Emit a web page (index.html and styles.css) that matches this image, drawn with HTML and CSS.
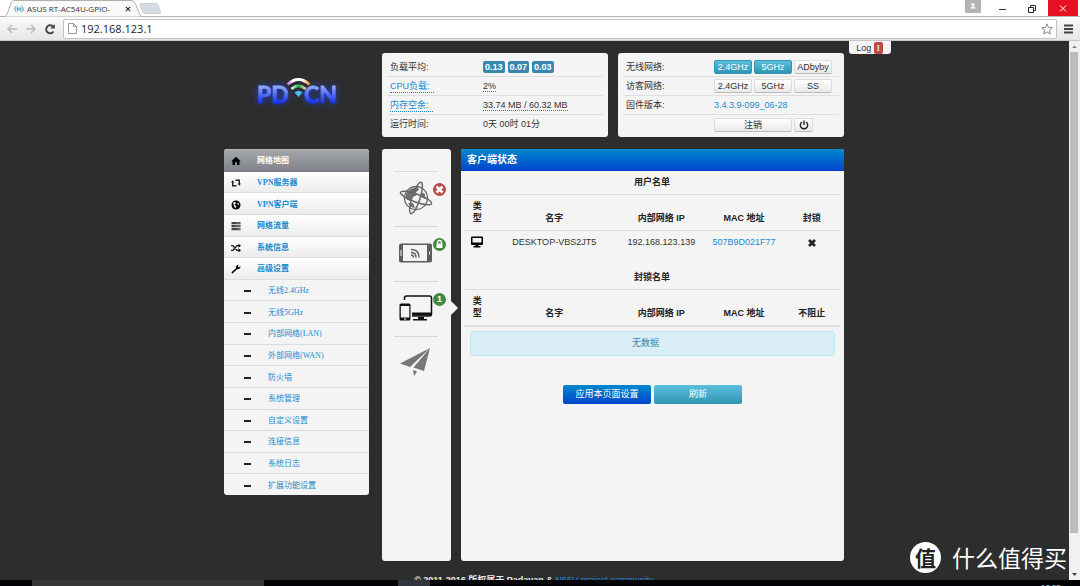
FILE: index.html
```
<!DOCTYPE html>
<html lang="zh-CN">
<head>
<meta charset="utf-8">
<title>ASUS RT-AC54U-GPIO</title>
<link rel="stylesheet" href="styles.css">
</head>
<body>
<header class="tabstrip">
  <div class="tab">
    <svg class="tab-shape" viewBox="0 0 138 17" preserveAspectRatio="none"><path d="M0 17C5 16 5 1 10 .5H128C133 1 134 16 138 17Z" fill="#fafafa" stroke="#b0b0b0"/></svg>
    <svg class="favicon" viewBox="0 0 10 8" fill="none" stroke="#2a9bd0"><path d="M2.500 .8Q-.8 4 2.500 7.200M4 2Q2 4 4 6M7.500 .8Q10.800 4 7.500 7.200M6 2Q8 4 6 6"/><circle cx="5" cy="4" r=".5"/></svg>
    <span class="tab-title">ASUS RT-AC54U-GPIO-</span>
    <button class="tab-close" aria-label="关闭标签页"><svg viewBox="0 0 6 6" stroke="#333" stroke-width="1.200"><path d="M.8 .8 5.200 5.200M5.200 .8 .8 5.200"/></svg></button>
  </div>
  <svg class="newtab" viewBox="0 0 22 11"><path d="M2 .5H17Q19 .5 19.500 3L21.500 9Q21.500 10.500 20 10.500H6Q4 10.500 3.500 8.500L1 2Q.8 .5 2 .5Z" fill="#d5dce4" stroke="#c9cfd6"/></svg>
  <div class="window-controls">
    <button class="user" aria-label="用户"><svg viewBox="0 0 16 13" fill="#fff"><circle cx="8" cy="4.500" r="1.600"/><path d="M5.500 8.500Q5.500 6 8 6.500 10.500 6 10.500 8.500Z"/></svg></button>
    <button class="wc" aria-label="最小化"><svg viewBox="0 0 30 17" stroke="#333" fill="none"><path d="M11 9.500H18"/></svg></button>
    <button class="wc" aria-label="还原"><svg viewBox="0 0 30 17" stroke="#222" fill="none"><path d="M10.500 7.500H15.500V12.500H10.500ZM12.500 7.500V5.500H17.500V10.500H15.500"/></svg></button>
    <button class="wc close" aria-label="关闭"><svg viewBox="0 0 30 17" stroke="#fff" fill="none"><path d="M12 5.500 18 11.500M18 5.500 12 11.500"/></svg></button>
  </div>
</header>
<div class="toolbar">
  <button class="tool" aria-label="后退"><svg viewBox="0 0 12 12" fill="none" stroke="#bbb" stroke-width="1.500"><path d="M11 6H2M6 2 2 6 6 10"/></svg></button>
  <button class="tool" aria-label="前进"><svg viewBox="0 0 12 12" fill="none" stroke="#bbb" stroke-width="1.500"><path d="M1 6H10M6 2 10 6 6 10"/></svg></button>
  <button class="tool" aria-label="刷新页面"><svg viewBox="0 0 12 12"><path d="M9.500 8.500A4 4 0 1 1 8.800 3.300" fill="none" stroke="#444" stroke-width="1.900"/><path d="M10.800 1V5.600H6.200Z" fill="#444"/></svg></button>
  <div class="address">
    <svg class="page" viewBox="0 0 9 11" fill="#fff" stroke="#999"><path d="M.5 .5H5.500L8.500 3.500V10.500H.5ZM5.500 .5V3.500H8.500"/></svg>
    <input type="text" aria-label="地址" value="192.168.123.1">
    <svg class="star" viewBox="0 0 12 12" fill="#fff" stroke="#888"><path d="M6 .8 7.500 4.500 11.400 4.700 8.300 7.200 9.400 11 6 8.900 2.600 11 3.700 7.200 .6 4.700 4.500 4.500Z"/></svg>
  </div>
  <button class="menu" aria-label="菜单"><svg viewBox="0 0 10 10" stroke="#444" stroke-width="2"><path d="M0 1.500H9M0 5H9M0 8.500H9"/></svg></button>
</div>

<div class="viewport">
  <main class="content">
    <button class="log">Log <b>!</b></button>
    <div class="page-grid">
      <div class="top">
        <div class="logo">
          <svg viewBox="0 0 100 44">
            <defs>
              <linearGradient id="word" x1="0" y1="0" x2="0" y2="1"><stop offset=".2" stop-color="#93aef5"/><stop offset=".8" stop-color="#1735f2"/></linearGradient>
              <linearGradient id="arc"><stop offset="0" stop-color="#b06fd0"/><stop offset=".25" stop-color="#fff"/><stop offset=".7" stop-color="#fff"/><stop offset="1" stop-color="#f28a2c"/></linearGradient>
              <linearGradient id="arc2"><stop offset="0" stop-color="#eee"/><stop offset=".5" stop-color="#25b34b"/><stop offset="1" stop-color="#f5c7a0"/></linearGradient>
            </defs>
            <g class="word" fill="url(#word)" stroke="url(#word)" stroke-width=".8"><text x="8" y="31">PD</text><text x="55" y="31">CN</text></g>
            <path d="M39 13Q49.500 3 60 13L57 17 49.500 24 42 17Z" fill="#2b2b33"/>
            <path d="M38.500 12.500Q49.500 2.500 60.500 12.500" fill="none" stroke="url(#arc)" stroke-width="3"/>
            <path d="M42.500 17Q49.500 10.500 56.500 17" fill="none" stroke="url(#arc2)" stroke-width="3"/>
            <path d="M45.500 20.500Q49.500 17 53.500 20.500L49.500 25Z" fill="#4db8f0"/>
          </svg>
        </div>
        <section class="card status">
          <div class="row"><span>负载平均:</span><span class="loads"><b>0.13</b><b>0.07</b><b>0.03</b></span></div>
          <div class="row"><a class="dotted" href="#">CPU负载:&ensp;</a><span><span class="dotted">2%</span></span></div>
          <div class="row"><a class="dotted" href="#">内存空余:&ensp;</a><span><span class="dotted">33.74 MB / 60.32 MB</span></span></div>
          <div class="row"><span>运行时间:</span><span>0天 00时 01分</span></div>
        </section>
        <section class="card wifi">
          <div class="row"><span>无线网络:</span><span class="btns"><button class="btn info">2.4GHz</button><button class="btn info">5GHz</button><button class="btn">ADbyby</button></span></div>
          <div class="row"><span>访客网络:</span><span class="btns"><button class="btn">2.4GHz</button><button class="btn">5GHz</button><button class="btn">SS</button></span></div>
          <div class="row"><span>固件版本:</span><a href="#">3.4.3.9-099_06-28</a></div>
          <div class="row"><span></span><span class="btns"><button class="btn wide">注销</button><button class="btn power" aria-label="电源"><svg viewBox="0 0 10 10" fill="none" stroke="#222" stroke-width="1.400"><path d="M3 2A3.700 3.700 0 1 0 7 2M5 .5V5"/></svg></button></span></div>
        </section>
      </div>

      <div class="lower">
        <nav class="side">
          <a class="item active" href="#"><svg viewBox="0 0 10 10"><path d="M5 .8 9.800 5.200H8.500V9H6V6.300H4V9H1.500V5.200H.2Z"/></svg>网络地图</a>
          <a class="item" href="#"><svg viewBox="0 0 10 10" fill="none" stroke="#222" stroke-width="1.400"><path d="M1.700 4V7.800H5.500M8.300 6V2.200H4.500"/><path d="M0 4.500 1.700 2.300 3.400 4.500ZM6.600 5.500 8.300 7.700 10 5.500Z" fill="#222" stroke="none"/></svg>VPN服务器</a>
          <a class="item" href="#"><svg viewBox="0 0 10 10"><circle cx="5" cy="5" r="4.500"/><path d="M2 2.500 4.500 2 5 3.500 3.500 4.500 5.500 6.500 4.500 8.500 3 6ZM6.500 2.500 8 3.500 7.500 5.500 6.300 4Z" fill="#eee"/></svg>VPN客户端</a>
          <a class="item" href="#"><svg viewBox="0 0 10 10" fill="#444"><path d="M.5 1H9.500V3.200H.5ZM.5 4H9.500V6.200H.5ZM.5 7H9.500V9.200H.5Z"/><path d="M5 2H9M4 5H9M6 8H9" stroke="#aaa" stroke-width=".6"/></svg>网络流量</a>
          <a class="item" href="#"><svg viewBox="0 0 10 10"><path d="M0 2.700H2L6 7.300H8M0 7.300H2L6 2.700H8" fill="none" stroke="#222" stroke-width="1.300"/><path d="M7.500 .8 10 2.700 7.500 4.600ZM7.500 5.400 10 7.300 7.500 9.200Z"/></svg>系统信息</a>
          <a class="item" href="#"><svg viewBox="0 0 10 10"><path d="M.8 9.200Q.2 8.300 1 7.700L5 4.200Q4.500 1.800 6.300 .9L8 .8 6.800 2.200 7.200 3.200 8.200 3.300 9.400 2Q9.700 5.500 6 5.300L2.200 9.100Q1.500 9.900 .8 9.200Z"/></svg>高级设置</a>
          <a class="sub" href="#">无线2.4GHz</a>
          <a class="sub" href="#">无线5GHz</a>
          <a class="sub" href="#">内部网络(LAN)</a>
          <a class="sub" href="#">外部网络(WAN)</a>
          <a class="sub" href="#">防火墙</a>
          <a class="sub" href="#">系统管理</a>
          <a class="sub" href="#">自定义设置</a>
          <a class="sub" href="#">连接信息</a>
          <a class="sub" href="#">系统日志</a>
          <a class="sub" href="#">扩展功能设置</a>
        </nav>

        <nav class="strip">
          <a href="#" aria-label="互联网">
            <svg viewBox="0 0 34 34" fill="none" stroke="#686868"><circle cx="17" cy="17" r="11.500" stroke-width="1.300"/><path d="M7 13Q10 6 19 6.500L20 9 17 11 18 14 14 16 11 20 7 18ZM9 22 14 22 16 27 12 26ZM22 11 26 13 26 18 22 16Z" fill="#707070" stroke="none"/><ellipse cx="17" cy="17" rx="16.500" ry="4" transform="rotate(20 17 17)" stroke-width="1.500"/><ellipse cx="17" cy="17" rx="16.500" ry="4" transform="rotate(-72 17 17)" stroke-width="1.500"/></svg>
            <i class="badge red"><svg viewBox="0 0 13 13" stroke="#fff" stroke-width="2.600"><path d="M3.500 3.500 9.500 9.500M9.500 3.500 3.500 9.500"/></svg></i>
          </a>
          <a href="#" aria-label="无线">
            <svg viewBox="0 0 34 34"><rect x="0" y="7.500" width="33" height="19" rx="2" fill="#5e5e5e"/><path d="M4 9H28V25H4Z" fill="#f4f4f4"/><path d="M2 14V20M30.500 15.500V18.500" stroke="#eee"/><g fill="none" stroke="#606060" stroke-width="1.400"><path d="M12 13.500Q20 13.500 20 21.500M12 16.500Q17 16.500 17 21.500M12 19Q14.500 19 14.500 21.500"/></g></svg>
            <i class="badge green"><svg viewBox="0 0 13 13"><path d="M3.500 5.500H9.500V10H3.500Z" fill="#fff"/><path d="M4.500 6V4.500Q4.500 2.500 6.500 2.500T8.500 4.500V6" fill="none" stroke="#fff" stroke-width="1.300"/></svg></i>
          </a>
          <a class="current" href="#" aria-label="客户端">
            <svg viewBox="0 0 34 34"><path d="M5.500 9V7Q5.500 5 7.500 5H30.500Q32.500 5 32.500 7V23Q32.500 25 30.500 25H13" fill="none" stroke="#111" stroke-width="1.500"/><path d="M13 21.500H32.500V24.500H13ZM19 26H25V28H28V29.500H14V28H19Z" fill="#111"/><path d="M2 12.500H10Q11.500 12.500 11.500 14V28Q11.500 29.500 10 29.500H2Q.5 29.500 .5 28V14Q.5 12.500 2 12.500Z" fill="#111"/><path d="M1.800 15H10.300V26.500H1.800Z" fill="#f4f4f4"/><path d="M5 28H7.300" stroke="#f4f4f4"/></svg>
            <i class="badge green">1</i>
          </a>
          <a href="#" aria-label="发送">
            <svg viewBox="0 0 34 34" fill="#777"><path d="M31 2 1 17.500 11 21ZM31 2 14.500 21.500 25 25ZM14 24 18 25.500 15 30Z"/></svg>
          </a>
        </nav>

        <section class="panel">
          <h1>客户端状态</h1>
          <table>
            <caption>用户名单</caption>
            <thead><tr><th>类型</th><th>名字</th><th>内部网络 IP</th><th>MAC 地址</th><th>封锁</th></tr></thead>
            <tbody><tr>
              <td><svg class="monitor" viewBox="0 0 12 12"><path d="M1 .5H11Q12 .5 12 1.500V8Q12 9 11 9H7.500V10H9.500V11.500H2.500V10H4.500V9H1Q0 9 0 8V1.500Q0 .5 1 .5Z"/><path d="M1.500 2H10.500V6.500H1.500Z" fill="#f4f4f4"/></svg></td>
              <td>DESKTOP-VBS2JT5</td><td>192.168.123.139</td><td><a href="#">507B9D021F77</a></td>
              <td><button class="block" aria-label="封锁"><svg viewBox="0 0 8 8" stroke="#222" stroke-width="2.600"><path d="M1 1 7 7M7 1 1 7"/></svg></button></td>
            </tr></tbody>
          </table>
          <table class="blocked">
            <caption>封锁名单</caption>
            <thead><tr><th>类型</th><th>名字</th><th>内部网络 IP</th><th>MAC 地址</th><th>不阻止</th></tr></thead>
          </table>
          <div class="alert">无数据</div>
          <div class="actions"><button class="apply">应用本页面设置</button><button class="refresh">刷新</button></div>
        </section>
      </div>
      <footer>© 2011-2016 版权属于 Padavan &amp; <a href="#">N56U project community</a></footer>
    </div>
    <div class="watermark"><span class="seal">值</span>什么值得买</div>
  </main>
  <div class="scrollbar">
    <svg viewBox="0 0 11 11"><path d="M3 7H8L5.500 4.500Z" fill="#888"/></svg>
    <span class="thumb"></span>
    <svg viewBox="0 0 11 11"><path d="M3 4H8L5.500 7Z" fill="#444"/></svg>
  </div>
</div>
<div class="taskbar"><span class="start"></span><span class="search"></span><span class="apps"></span><span class="running"></span><time>12:55</time></div>
</body>
</html>
```
FILE: styles.css
```
* { box-sizing: border-box; }
body {
  margin: 0;
  height: 100vh;
  display: flex;
  flex-direction: column;
  overflow: hidden;
  background: #2d2d2d;
  color: #333;
  font: 9px/12px "Liberation Sans", "Noto Sans CJK SC", sans-serif;
}
button { font: inherit; color: inherit; padding: 0; border: 0; background: none; }
svg { display: block; }
a { color: #1a8bd0; text-decoration: none; }

/* browser window */
.tabstrip {
  flex: none;
  height: 17px;
  display: flex;
  padding-left: 4px;
  background: #fff;
  border-bottom: 1px solid #b4b4b4;
}
.tab {
  position: relative;
  width: 138px;
  height: 17px;
  display: flex;
  align-items: center;
  padding: 0 11px 0 10px;
  gap: 3px;
  font: 8px/12px "Open Sans", sans-serif;
}
.tab > * { position: relative; flex: none; }
.tab .tab-shape { position: absolute; inset: 0; width: 100%; height: 100%; }
.favicon { width: 10px; height: 8px; }
.tab .tab-title { flex: 1; overflow: hidden; white-space: nowrap; }
.tab-close { width: 6px; }
.newtab { width: 22px; height: 11px; margin: 3px 0 0 -3px; }
.window-controls { margin-left: auto; display: flex; padding-right: 2px; }
.user { width: 16px; height: 13px; background: #b3b3b3; margin-right: 7px; }
.wc { width: 30px; height: 16px; }
.wc svg { height: 17px; width: 30px; }
.close { background: #e81123; }
.toolbar {
  flex: none;
  height: 24px;
  display: flex;
  align-items: center;
  gap: 7px;
  padding: 0 6px;
  background: linear-gradient(#fafafa, #e6e6e6);
  border-bottom: 1px solid #c6c6c6;
}
.tool { width: 12px; height: 12px; }
.address {
  flex: 1;
  height: 20px;
  display: flex;
  align-items: center;
  gap: 4px;
  padding: 0 3px 0 4px;
  background: #fff;
  border: 1px solid #c4c4c4;
  border-radius: 2px;
}
.page { width: 9px; height: 11px; }
.address input {
  flex: 1;
  min-width: 0;
  border: 0;
  padding: 0;
  outline: 0;
  background: none;
  color: #222;
  font: 11px/16px "Open Sans", sans-serif;
}
.star { width: 12px; height: 12px; }
.menu { width: 10px; height: 10px; }

.viewport { flex: 1; min-height: 0; display: flex; }
.content { position: relative; flex: 1; overflow: hidden; padding-right: 1px; }
.scrollbar {
  width: 11px;
  display: flex;
  flex-direction: column;
  background: #f1f1f1;
}
.thumb { flex: 1; margin: 0 2px 36px 1px; background: #bcbcbc; }
.page-grid { width: 620px; margin: 0 auto; padding-top: 12px; }

/* header cards */
.top { display: grid; grid-template-columns: 148px 1fr 1fr; column-gap: 10px; }
.logo { padding: 19px 0 0 25px; }
.logo svg { width: 100px; height: 44px; overflow: visible; }
.word {
  font: bold 23px Lato, sans-serif;
  filter: drop-shadow(0 0 3px #2440d8);
}
.card { padding: 5px 5px 3px; background: #f4f4f4; border-radius: 3px; }
.row {
  height: 19px;
  display: grid;
  grid-template-columns: 93px 1fr;
  align-items: center;
  justify-items: start;
  padding-left: 3px;
  border-bottom: 1px solid #dedede;
  white-space: nowrap;
}
.row:last-child { border: 0; }
.status .row:last-child { height: 17px; }
.wifi .row { grid-template-columns: 88px 1fr; }
.loads { display: flex; gap: 3px; }
.loads b {
  padding: 0 2px;
  border-radius: 2px;
  background: #3a87ad;
  color: #fff;
}
.dotted { border-bottom: 1px dotted #1a86c8; }
.btns { display: flex; gap: 2px; }
.btn {
  width: 38px;
  height: 14px;
  line-height: 12px;
  border: 1px solid #dcdcdc;
  border-bottom-color: #bbb;
  border-radius: 2px;
  background: linear-gradient(#fff, #e8e8e8);
}
.info { color: #fff; background: linear-gradient(#5bc0de, #2f96b4); border-color: #2f96b4; }
.wide { width: 78px; }
.power { width: 19px; }
.power svg { width: 10px; height: 10px; margin: auto; }
.log {
  position: absolute;
  top: 0;
  left: calc(50% + 314px);
  width: 42px;
  height: 13px;
  background: #f4f4f4;
  border-radius: 0 0 3px 3px;
  white-space: nowrap;
}
.log b { display: inline-block; padding: 0 3px; background: #b94a48; color: #fff; border-radius: 2px; }

/* sidebar */
.lower {
  display: grid;
  grid-template-columns: 145px 72px 1fr;
  column-gap: 10px;
  margin-top: 12px;
}
.side {
  align-self: start;
  min-height: 346px;
  display: flex;
  flex-direction: column;
  background: #f4f4f4;
  border-radius: 3px;
  overflow: hidden;
  font: 8px/12px "Liberation Serif", "Noto Sans CJK SC", serif;
}
.side a {
  flex: 1;
  display: flex;
  align-items: center;
  padding-top: 2px;
  border-bottom: 1px solid #dcdcdc;
}
.side .item {
  gap: 16px;
  padding-left: 7px;
  font-weight: bold;
  background: linear-gradient(#fff, #ececec);
}
.side svg { width: 10px; height: 10px; }
.side .active {
  color: #fff;
  background: linear-gradient(#a3a6aa, #808388);
  border-top: 1px solid #b4b6b9;
  border-bottom-color: #77797d;
}
.side .sub { gap: 17px; padding-left: 20px; }
.sub::before { content: ""; width: 7px; height: 2px; background: #222; }
.side a:last-child { border: 0; }

/* icon strip */
.strip { margin-left: 3px; background: #f4f4f4; border-radius: 3px; padding: 22px 13px 0 12px; }
.strip a { position: relative; display: block; height: 55px; padding: 9px 5px; border-top: 1px solid #d8d8d8; }
.strip a > svg { width: 34px; height: 34px; }
.badge {
  position: absolute;
  top: 11px;
  left: 39px;
  width: 13px;
  height: 13px;
  border-radius: 50%;
  color: #fff;
  text-align: center;
  font: bold 9px/13px "Liberation Sans", sans-serif;
}
.red { background: #b94a48; }
.green { background: #3f8a43; }
.current::after {
  content: "";
  position: absolute;
  top: 19px;
  left: 57px;
  border: 7px solid transparent;
  border-left-color: #f4f4f4;
  border-right: 0;
}

/* client panel */
.panel { min-height: 412px; background: #f4f4f4; border-radius: 3px; overflow: hidden; }
h1 {
  margin: 0;
  height: 22px;
  padding-left: 6px;
  color: #fff;
  font-size: 10px;
  line-height: 22px;
  background: linear-gradient(#0088cc, #0044cc);
}
table { width: calc(100% - 7px); margin: 0 4px 0 3px; table-layout: fixed; border-collapse: collapse; text-align: center; }
caption { height: 23px; padding-top: 5px; font-weight: bold; color: #222; }
th, td { padding: 0; border-top: 1px solid #dcdcdc; }
th { height: 36px; padding: 5px 0 6px; vertical-align: bottom; color: #222; }
th:nth-child(1) { width: 7%; padding-left: 7px; padding-right: 7px; }
th:nth-child(2) { width: 34%; }
th:nth-child(3) { width: 23%; }
th:nth-child(4) { width: 21%; }
td { height: 23px; }
.monitor { width: 12px; height: 12px; margin: auto; }
.block { width: 8px; vertical-align: middle; }
.blocked { margin-top: 12px; border-bottom: 2px solid #dfdfdf; }
.alert {
  margin: 4px 9px 0;
  height: 25px;
  padding-right: 14px;
  color: #3a87ad;
  line-height: 23px;
  text-align: center;
  background: #d9edf7;
  border: 1px solid #bce8f1;
  border-radius: 3px;
}
.actions { display: flex; justify-content: center; gap: 3px; margin-top: 29px; }
.actions button { width: 88px; height: 19px; color: #fff; border-radius: 2px; }
.apply { background: linear-gradient(#0088cc, #0044cc); }
.refresh { background: linear-gradient(#5bc0de, #2f96b4); }
footer { padding-top: 13px; text-align: center; font-weight: bold; color: #eee; white-space: nowrap; }
footer a { font-weight: normal; }

.watermark {
  position: absolute;
  right: 2px;
  bottom: 6px;
  display: flex;
  align-items: center;
  gap: 11px;
  color: #fff;
  font: 23px/34px "Noto Sans CJK SC", sans-serif;
  white-space: nowrap;
}
.seal {
  width: 31px;
  height: 31px;
  border-radius: 50%;
  background: #fff;
  color: #222;
  font-size: 21px;
  font-weight: bold;
  line-height: 30px;
  text-align: center;
}
.taskbar { flex: none; height: 6px; display: flex; background: #020306; overflow: hidden; }
.start { width: 3%; }
.search { width: 232px; background: #363636; }
.apps { width: 134px; }
.running { width: 32px; background: #30343c; }
.taskbar time { margin: 2px 19px 0 auto; color: #ddd; font-size: 8px; }
```
